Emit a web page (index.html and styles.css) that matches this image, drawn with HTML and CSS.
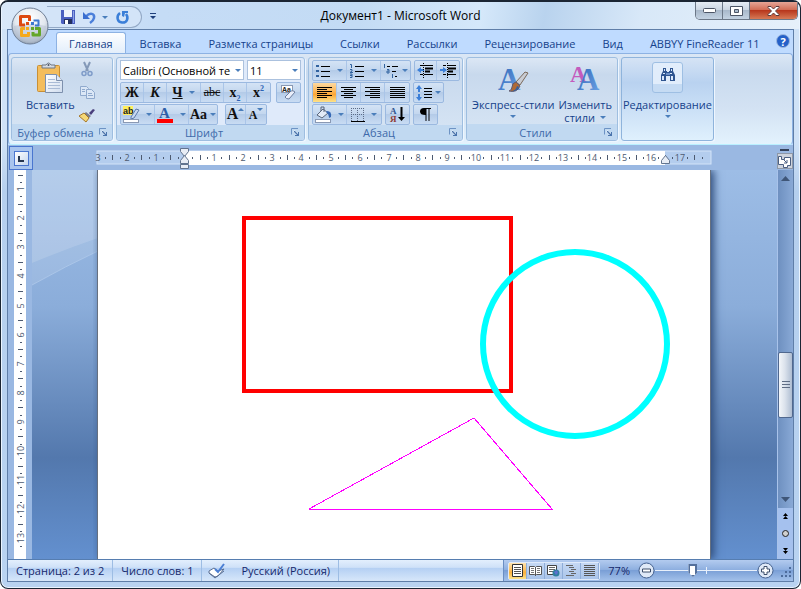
FILE: index.html
```
<!DOCTYPE html>
<html lang="ru">
<head>
    <meta charset="UTF-8">
    <meta name="viewport" content="width=device-width, initial-scale=1.0">
    <title>Документ1 - Microsoft Word</title>
    <link rel="stylesheet" href="styles.css">
</head>
<body>
    <svg class="defs" aria-hidden="true">
        <defs>
            <symbol id="arrow" viewBox="0 0 6 3"><path d="M0 0h6L3 3z" fill="#4a7ebb"/></symbol>
            <symbol id="launcher" viewBox="0 0 9 9">
                <path d="M.5 6.500V.5H7" fill="none" stroke="#6d93c4"/>
                <path d="M3 3l4 4" stroke="#fff" stroke-width="2"/>
                <path d="M3 3h1l3 3V4h1v4H4V7h2L3 4z" fill="#4a74ad"/>
            </symbol>
            <linearGradient id="blueA" x1="0" y1="0" x2="1" y2="1"><stop offset="0" stop-color="#2b62b4"/><stop offset="1" stop-color="#6fa6e8"/></linearGradient>
            <linearGradient id="paper" x1="0" y1="0" x2="1" y2="1"><stop offset="0" stop-color="#fff"/><stop offset="1" stop-color="#cfdcee"/></linearGradient>
            <radialGradient id="orb" cx=".5" cy=".3" r=".7"><stop offset="0" stop-color="#fff"/><stop offset=".6" stop-color="#e3e8ef"/><stop offset="1" stop-color="#9aa7b8"/></radialGradient>
        </defs>
    </svg>

    <div class="window">
        <header class="titlebar">
            <button class="office" aria-label="Office">
                <svg width="38" height="38" viewBox="0 0 38 38">
                    <circle cx="19" cy="19" r="18" fill="url(#orb)" stroke="#6f7f96"/>
                    <path d="M3 19a16 16 0 0 0 32 0q-16-4-32 0z" fill="#b4c0d2" opacity=".5"/>
                    <g fill="none" stroke-linejoin="round">
                        <path d="M14 18H9.500V9.500h9V14" stroke="#dd4a12" stroke-width="3"/>
                        <path d="M22.500 13.500h5v5H24" stroke="#3d78cf" stroke-width="2"/>
                        <path d="M14 21.500h-3.500v7h7V25" stroke="#f5a91c" stroke-width="3"/>
                        <path d="M24 21.500h4.500v6.500h-6.500V25" stroke="#64a629" stroke-width="3"/>
                    </g>
                    <path d="M15 15h3v3h-3z" fill="#dd4a12"/><path d="M20 15h3v3h-3z" fill="#3d78cf"/>
                    <path d="M15 20h3v3h-3z" fill="#f5a91c"/><path d="M20 20h3v3h-3z" fill="#64a629"/>
                </svg>
            </button>
            <div class="quick">
                <button aria-label="Сохранить">
                    <svg width="14" height="14" viewBox="0 0 14 14"><path d="M0 0h14v14H1l-1-1z" fill="#4a5fc0"/><path d="M3 0h8v7H3z" fill="#eef3fc"/><path d="M3 9h8v5H3z" fill="#23305f"/><path d="M4 10h3v4H4z" fill="#fff"/><path d="M12 1h1v12h-1z" fill="#8ea4e6"/></svg>
                </button>
                <button aria-label="Отменить" class="undo">
                    <svg width="14" height="13" viewBox="0 0 14 13"><path d="M3 5.500C7 1 12 2.500 11 7c-.5 2.500-2.500 4-4 5" fill="none" stroke="#4b7fda" stroke-width="2.500"/><path d="M0 1v7h7z" fill="#3b6fd0"/></svg>
                    <svg width="6" height="3"><use href="#arrow"/></svg>
                </button>
                <button aria-label="Повторить">
                    <svg width="13" height="13" viewBox="0 0 13 13"><path d="M4 2C0 5 1 11 6 11.500S13 7 10 3" fill="none" stroke="#3b7fd8" stroke-width="2.500"/><path d="M6 0h6v2H9l-1 4-2-1z" fill="#3b7fd8"/></svg>
                </button>
            </div>
            <button class="quick-more" aria-label="Настройка панели">
                <svg width="6" height="6" viewBox="0 0 6 6"><path d="M0 0h6v1H0zM0 3h6L3 6z" fill="#1e3f7c"/></svg>
            </button>
            <h1>Документ1 - Microsoft Word</h1>
            <div class="winbuttons">
                <button aria-label="Свернуть"><svg width="13" height="6"><rect x=".5" y=".5" width="12" height="4" rx="1" fill="#fff" stroke="#4c5566"/></svg></button>
                <button aria-label="Развернуть"><svg width="13" height="10"><path d="M.5 .5h12v9H.5zM4.500 3.500v3h4v-3z" fill="#fff" stroke="#4c5566" fill-rule="evenodd"/></svg></button>
                <button aria-label="Закрыть" class="close"><svg width="13" height="10" viewBox="0 0 13 10"><path d="M1 .5h3l2.500 2.500L9 .5h3v1L8.500 5l3.500 3.500v1H9L6.500 7 4 9.500H1v-1L4.500 5 1 1.500z" fill="#fff" stroke="#5d3a3a"/></svg></button>
            </div>
        </header>

        <div class="client">
            <nav class="tabs">
                <a href="#" class="active">Главная</a>
                <a href="#">Вставка</a>
                <a href="#">Разметка страницы</a>
                <a href="#">Ссылки</a>
                <a href="#">Рассылки</a>
                <a href="#">Рецензирование</a>
                <a href="#">Вид</a>
                <a href="#">ABBYY FineReader 11</a>
                <button class="help" aria-label="Справка">?</button>
            </nav>

            <div class="ribbon">
                <section class="group clipboard">
                    <div class="tools">
                        <button class="big">
                            <svg width="28" height="32" viewBox="0 0 28 32">
                                <rect x="1.500" y="3.500" width="22" height="26" rx="1" fill="#f4bd5c" stroke="#c98f35"/>
                                <path d="M6 6V3h4q2.500-4 5 0h4v3z" fill="#d6dbe3" stroke="#6c7684"/><circle cx="12.500" cy="3" r="1" fill="#4c5566"/>
                                <path d="M9.500 12.500h11l6 6v12h-17z" fill="url(#paper)" stroke="#7d90ad"/><path d="M20.500 12.500v6h6" fill="#dfe8f5" stroke="#7d90ad"/>
                                <path d="M12 17.500h7M12 20.500h12M12 23.500h12M12 26.500h12" stroke="#a9bbd6"/>
                            </svg>
                            <span>Вставить</span>
                            <svg width="6" height="3"><use href="#arrow"/></svg>
                        </button>
                        <div class="stack">
                            <button aria-label="Вырезать"><svg width="12" height="15" viewBox="0 0 12 15"><path d="M3 0l4 9M9 0L5 9" stroke="#8499b8" stroke-width="2"/><circle cx="3" cy="11.500" r="2" fill="none" stroke="#7f9cc9" stroke-width="1.500"/><circle cx="9" cy="11.500" r="2" fill="none" stroke="#7f9cc9" stroke-width="1.500"/></svg></button>
                            <button aria-label="Копировать"><svg width="15" height="13" viewBox="0 0 15 13"><path d="M.5 .5h6l2 2v7h-8z" fill="#dbe7f6" stroke="#8fa9cd"/><path d="M6.500 3.500h5l3 3v6h-8z" fill="#dbe7f6" stroke="#8fa9cd"/><path d="M2 3.500h3M2 5.500h3M8 7.500h4M8 9.500h5" stroke="#8fa9cd"/></svg></button>
                            <button aria-label="Формат по образцу"><svg width="16" height="14" viewBox="0 0 16 14"><path d="M10 5l4-4 2 1-4 5z" fill="#4a3f7c"/><path d="M7 4l5 4-2 2-5-4z" fill="#7b7f8c"/><path d="M5 5l5 5-3 4-7-6z" fill="#f5d876" stroke="#a5772a"/></svg></button>
                        </div>
                    </div>
                    <footer><span>Буфер обмена</span><button aria-label="Буфер обмена: параметры"><svg width="9" height="9"><use href="#launcher"/></svg></button></footer>
                </section>

                <section class="group font">
                    <div class="rows">
                        <div class="row">
                            <label class="combo wide"><select aria-label="Шрифт"><option>Calibri (Основной те</option></select><svg width="6" height="3"><use href="#arrow"/></svg></label>
                            <label class="combo"><select aria-label="Размер шрифта"><option>11</option></select><svg width="6" height="3"><use href="#arrow"/></svg></label>
                        </div>
                        <div class="row">
                            <div class="bar">
                                <button class="serif"><b>Ж</b></button><button class="serif"><b><i>К</i></b></button><button class="serif split"><b><u>Ч</u></b><svg width="6" height="3"><use href="#arrow"/></svg></button><button class="serif strike"><s>abc</s></button><button class="serif"><b>x<sub>2</sub></b></button><button class="serif"><b>x<sup>2</sup></b></button>
                            </div>
                            <div class="bar end"><button aria-label="Очистить формат"><svg width="17" height="17" viewBox="0 0 17 17"><rect x="1.500" y="1.500" width="11" height="7" fill="#fff" stroke="#8a99b3"/><text x="2" y="8" class="tiny">Aa</text><path d="M5 13l6-6q2-1 4 1l-6 7q-3 0-4-2z" fill="#e9eefa" stroke="#6c7d9e"/></svg></button></div>
                        </div>
                        <div class="row">
                            <div class="bar">
                                <button class="split" aria-label="Цвет выделения"><svg width="17" height="17" viewBox="0 0 17 17"><path d="M0 0h10v9H0z" fill="#ffef5c"/><text x="0" y="8" class="tiny ab">ab</text><path d="M8 11l5-8 3 1-5 8-3 1z" fill="#c8d8f0" stroke="#5b79aa"/><rect x=".5" y="13.500" width="15" height="3" fill="#fff" stroke="#8a99b3"/></svg><svg width="6" height="3"><use href="#arrow"/></svg></button><button class="split" aria-label="Цвет текста"><svg width="17" height="17" viewBox="0 0 17 17"><text x="2" y="12" class="letter">A</text><path d="M0 13h16v4H0z" fill="#f00"/></svg><svg width="6" height="3"><use href="#arrow"/></svg></button><button class="serif case"><b>Aa</b><svg width="6" height="3"><use href="#arrow"/></svg></button>
                            </div>
                            <div class="bar sizes"><button class="serif grow"><b>A</b><svg width="6" height="3" class="up"><use href="#arrow"/></svg></button><button class="serif shrink"><b>A</b><svg width="6" height="3" class="up"><use href="#arrow"/></svg></button></div>
                        </div>
                    </div>
                    <footer><span>Шрифт</span><button aria-label="Шрифт: параметры"><svg width="9" height="9"><use href="#launcher"/></svg></button></footer>
                </section>

                <section class="group para">
                    <div class="rows">
                        <div class="row">
                            <div class="bar">
                                <button class="split" aria-label="Маркеры"><svg width="15" height="14" viewBox="0 0 15 14"><path d="M0 1h3v2H0zM0 6h3v2H0zM0 11h3v2H0z" fill="#31629f"/><path d="M5 2.500h9M5 7.500h9M5 12.500h9" stroke="#000"/></svg><svg width="6" height="3"><use href="#arrow"/></svg></button><button class="split" aria-label="Нумерация"><svg width="15" height="14" viewBox="0 0 15 14"><path d="M0 .5h1.500V4M0 5.500h2v1.500l-2 1.500h3M0 10h2v3.500H0M0 11.500h2" fill="none" stroke="#31629f"/><path d="M5 2.500h9M5 7.500h9M5 12.500h9" stroke="#000"/></svg><svg width="6" height="3"><use href="#arrow"/></svg></button><button class="menu" aria-label="Многоуровневый список"><svg width="16" height="14" viewBox="0 0 16 14"><path d="M1.500 0v4M4 5.500h2V9H4V7h2M9.500 10v4" fill="none" stroke="#31629f"/><path d="M4 2.500h3M9 2.500h6M9 7.500h4M12 12.500h2" stroke="#000"/></svg><svg width="6" height="3"><use href="#arrow"/></svg></button>
                            </div>
                            <div class="bar indents">
                                <button aria-label="Уменьшить отступ"><svg width="17" height="15" viewBox="0 0 17 15"><path d="M3 2.500h3M7 2.500h9M3 11.500h3M7 11.500h9" stroke="#000"/><path d="M8 5.500h8M8 8.500h5" stroke="#000" stroke-width="2"/><path d="M0 7l4-3v2h3v2H4v2z" fill="#3b7fd8"/><path d="M6.500 0v15" stroke="#000" stroke-dasharray="1 1"/></svg></button><button aria-label="Увеличить отступ"><svg width="17" height="15" viewBox="0 0 17 15"><path d="M3 2.500h3M7 2.500h9M3 11.500h3M7 11.500h9" stroke="#000"/><path d="M8 5.500h8M8 8.500h5" stroke="#000" stroke-width="2"/><path d="M7 7L3 4v2H0v2h3v2z" fill="#3b7fd8"/><path d="M7.500 0v15" stroke="#000" stroke-dasharray="1 1"/></svg></button>
                            </div>
                        </div>
                        <div class="row">
                            <div class="bar aligns">
                                <button class="on" aria-label="По левому краю"><svg width="15" height="12"><path d="M0 .5h15M0 2.500h10M0 4.500h15M0 6.500h10M0 8.500h15M0 10.500h10" stroke="#000"/></svg></button><button aria-label="По центру"><svg width="15" height="12"><path d="M0 .5h15M3 2.500h9M0 4.500h15M3 6.500h9M0 8.500h15M3 10.500h9" stroke="#000"/></svg></button><button aria-label="По правому краю"><svg width="15" height="12"><path d="M0 .5h15M5 2.500h10M0 4.500h15M5 6.500h10M0 8.500h15M5 10.500h10" stroke="#000"/></svg></button><button aria-label="По ширине"><svg width="15" height="12"><path d="M0 .5h15M0 2.500h15M0 4.500h15M0 6.500h15M0 8.500h15M0 10.500h15" stroke="#000"/></svg></button>
                            </div>
                            <div class="bar"><button class="menu" aria-label="Интервал"><svg width="16" height="16" viewBox="0 0 16 16"><path d="M3 0l3 4H4v3H2V4H0zM3 16l3-4H4V9H2v3H0z" fill="#3b7fd8"/><path d="M8 3.500h8M8 6.500h8M8 9.500h8M8 12.500h8" stroke="#000"/></svg><svg width="6" height="3"><use href="#arrow"/></svg></button></div>
                        </div>
                        <div class="row">
                            <div class="bar">
                                <button class="split" aria-label="Заливка"><svg width="17" height="17" viewBox="0 0 17 17"><path d="M2 9l6-6 5 4-6 5z" fill="#e3ebf7" stroke="#59657a"/><path d="M6 5V1h3v5" fill="none" stroke="#59657a"/><path d="M12 5q5 0 4 6l-2 1q0-4-3-6z" fill="#3668b5"/><rect x=".5" y="13.500" width="15" height="3" fill="#fff" stroke="#8a99b3"/></svg><svg width="6" height="3"><use href="#arrow"/></svg></button><button class="split" aria-label="Границы"><svg width="14" height="14"><path d="M.5 0v13M6.500 0v13M12.500 0v13M0 .5h13M0 6.500h13" stroke="#5c6b85" stroke-dasharray="1 1"/><path d="M0 13.500h14" stroke="#000"/></svg><svg width="6" height="3"><use href="#arrow"/></svg></button>
                            </div>
                            <div class="bar"><button aria-label="Сортировка"><svg width="15" height="17" viewBox="0 0 15 17"><text x="0" y="8" class="sort">А</text><text x="0" y="16" class="sort red">Я</text><path d="M11.500 1v11" stroke="#000" stroke-width="2"/><path d="M8 11h7l-3.500 4z"/></svg></button></div>
                            <div class="bar"><button aria-label="Знаки абзаца"><svg width="11" height="13" viewBox="0 0 11 13"><path d="M4 0h7v1H9.500v12h-1V1H6.500v12h-1V7Q0 7 0 3.500T4 0z"/></svg></button></div>
                        </div>
                    </div>
                    <footer><span>Абзац</span><button aria-label="Абзац: параметры"><svg width="9" height="9"><use href="#launcher"/></svg></button></footer>
                </section>

                <section class="group styles">
                    <div class="tools">
                        <button class="big">
                            <svg width="30" height="32" viewBox="0 0 30 32"><text x="0" y="28" class="huge blue">A</text><path d="M27 10l3 1-8 12-4-3z" fill="#c9ccd3" stroke="#7a6a5c"/><path d="M18 20l4 4q-3 7-11 5 3-1 3-4 0-4 4-5z" fill="#b06a35" stroke="#5f5a70"/><path d="M13 29q5 0 6-5l2 1q-2 5-8 4z" fill="#335f9e"/></svg>
                            <span>Экспресс-стили</span>
                            <svg width="6" height="3"><use href="#arrow"/></svg>
                        </button>
                        <button class="big">
                            <svg width="30" height="32" viewBox="0 0 30 32"><text x="0" y="20" class="mid">A</text><text x="7" y="28" class="huge blue">A</text></svg>
                            <span>Изменить</span>
                            <span class="line2">стили <svg width="6" height="3"><use href="#arrow"/></svg></span>
                        </button>
                    </div>
                    <footer><span>Стили</span><button aria-label="Стили: параметры"><svg width="9" height="9"><use href="#launcher"/></svg></button></footer>
                </section>

                <section class="group edit">
                    <button class="big">
                        <span class="tile"><svg width="16" height="14" viewBox="0 0 16 14"><path d="M3 0h3v3h1v1h2V3h1V0h3v3l2 4v6h-5V8H6v5H1V7l2-4z" fill="#2f5590"/><path d="M4 1h1v2H4zM11 1h1v2h-1zM3 5h2v1H3zM10 5h2v1h-2zM2 8h2v4H2zM11 8h2v4h-2z" fill="#dce9fb"/><path d="M6 5h4v2H6z" fill="#6b8fc6"/></svg></span>
                        <span>Редактирование</span>
                        <svg width="6" height="3"><use href="#arrow"/></svg>
                    </button>
                </section>
            </div>

            <div class="hruler">
                <button class="tabstop" aria-label="Табуляция"><span><svg width="6" height="6"><path d="M1 0v5h5" fill="none" stroke="#26364f" stroke-width="2"/></svg></span></button>
                <svg id="hruler" height="24"></svg>
                <div class="corner">
                    <span class="splitter"></span>
                    <button aria-label="Линейка"><svg width="13" height="13" viewBox="0 0 13 13"><path d="M.5 1.500h3v3h3v-2h6v8h-3v2h-4v-3h-5z" fill="#fff" stroke="#4b5f82"/><path d="M5 4l4 4M9 5v3H6" fill="none" stroke="#4b5f82"/></svg></button>
                </div>
            </div>

            <main class="workspace">
                <svg id="vruler" width="24"></svg>
                <div class="desk">
                    <svg class="swoosh" viewBox="0 0 66 400" width="66" height="400"><path d="M0 93Q34 79 66 68V0H0z" fill="#fff" opacity=".14"/><path d="M0 115Q34 96 66 81V0H0z" fill="#fff" opacity=".12"/><path d="M0 115Q34 96 66 81" fill="none" stroke="#b9d0ee" opacity=".6"/></svg>
                    <div class="page">
                        <svg width="100%" height="100%" fill="none">
                            <rect x="146" y="48" width="267" height="173" stroke="#f00" stroke-width="4"/>
                            <circle cx="477" cy="174" r="92" stroke="#0ff" stroke-width="6"/>
                            <path d="M376 248L211 339H454z" stroke="#f0f" shape-rendering="crispEdges"/>
                        </svg>
                    </div>
                </div>
                <div class="scroll">
                    <div class="track">
                        <button aria-label="Вверх"><svg width="9" height="5"><path d="M0 5h9L4.500 0z" fill="#3f5678"/></svg></button>
                        <span class="above"></span>
                        <span class="thumb"></span>
                        <span class="below"></span>
                        <button aria-label="Вниз"><svg width="9" height="5"><path d="M0 0h9L4.500 5z" fill="#3f5678"/></svg></button>
                    </div>
                    <div class="browse">
                        <button aria-label="Предыдущая страница"><svg width="5" height="7"><path d="M2.500 0L5 3H0zM2.500 3L5 6H0z"/></svg></button>
                        <button aria-label="Объект перехода"><svg width="7" height="7"><circle cx="3.500" cy="3.500" r="3" fill="#cfcfcf" stroke="#222"/></svg></button>
                        <button aria-label="Следующая страница"><svg width="5" height="7"><path d="M2.500 7L5 4H0zM2.500 4L5 1H0z"/></svg></button>
                    </div>
                </div>
            </main>

            <footer class="status">
                <button>Страница: 2 из 2</button>
                <button>Число слов: 1</button>
                <button class="spell" aria-label="Правописание"><svg width="17" height="16" viewBox="0 0 17 16"><path d="M0 8l5-3 4 3 6-2-6 7-3 1-6-4z" fill="#fff" stroke="#5b6f93"/><path d="M0 10l6 5 9-7" fill="none" stroke="#5b6f93"/><path d="M6 6l3 3 6-8" fill="none" stroke="#4b7fd4" stroke-width="2"/></svg></button>
                <button class="lang">Русский (Россия)</button>
                <div class="viewzone">
                    <div class="views">
                        <button class="on" aria-label="Разметка страницы"><svg width="11" height="13"><path d="M.5 .5h10v12H.5z" fill="#fff" stroke="#333"/><path d="M2 3.500h7M2 5.500h7M2 7.500h7M2 9.500h7" stroke="#555"/></svg></button><button aria-label="Режим чтения"><svg width="13" height="12"><path d="M.5 1.500h5l1 1 1-1h5v8h-5l-1 1-1-1h-5zM6.500 2v9" fill="#fff" stroke="#555"/><path d="M2 3.500h3M2 5.500h3M2 7.500h3M8 3.500h3M8 5.500h3M8 7.500h3" stroke="#777"/></svg></button><button aria-label="Веб-документ"><svg width="13" height="12"><path d="M.5 .5h9v9h-9z" fill="#fff" stroke="#444"/><path d="M2 2.500h6M2 4.500h6M2 6.500h4" stroke="#666"/><circle cx="9" cy="8" r="3.500" fill="#2f7f9f"/><path d="M7 7l3-2 1 3-2 2z" fill="#5b6fd0"/></svg></button><button aria-label="Структура"><svg width="11" height="11"><path d="M0 .5h7M3 2.500h5M5 4.500h5M3 6.500h5M5 8.500h5M0 10.500h8" stroke="#666"/></svg></button><button aria-label="Черновик"><svg width="11" height="11"><path d="M0 .5h11M0 2.500h11M0 4.500h11M0 6.500h11M0 8.500h11M0 10.500h11" stroke="#555"/></svg></button>
                    </div>
                    <button class="percent">77%</button>
                    <button class="round" aria-label="Уменьшить"><svg width="17" height="17"><circle cx="8.500" cy="8.500" r="7.500" fill="#dfe9f7" stroke="#44618f"/><path d="M4.500 7h8v3h-8z" fill="#fff" stroke="#3c4e6b"/></svg></button>
                    <input type="range" min="0" max="100" value="36" aria-label="Масштаб">
                    <button class="round" aria-label="Увеличить"><svg width="17" height="17"><circle cx="8.500" cy="8.500" r="7.500" fill="#dfe9f7" stroke="#44618f"/><path d="M7 4.500h3V7h2.500v3H10v2.500H7V10H4.500V7H7z" fill="#fff" stroke="#3c4e6b"/></svg></button>
                    <svg class="grip" width="11" height="11"><path d="M8 0h2v2H8zM4 4h2v2H4zM8 4h2v2H8zM0 8h2v2H0zM4 8h2v2H4zM8 8h2v2H8z" fill="#4d6c9c"/></svg>
                </div>
            </footer>
        </div>
    </div>

    <script>
        // one centimetre at 77% zoom
        const CM = 29.1;

        function marks(from, to, place) {
            let out = '';
            for (let q = from; q <= to; q++) {
                const pos = Math.round(q * CM / 4);
                if (q % 4 === 0) {
                    if (q !== 0) out += place(pos, 'num', Math.abs(q / 4));
                } else {
                    out += place(pos, q % 2 === 0 ? 'half' : 'dot');
                }
            }
            return out;
        }

        const zero = 89;
        document.getElementById('hruler').innerHTML =
            '<rect x="1" y="5" width="614" height="13" fill="#b4cdee" stroke="#d3e3f8"/>' +
            '<rect x="88" y="5" width="481" height="14" fill="#fff"/>' +
            marks(-12, 71, (p, kind, n) => {
                const x = zero + p;
                if (kind === 'num') return `<text x="${x}" y="15" class="num">${n}</text>`;
                const h = kind === 'half' ? 5 : 2;
                return `<rect x="${x}" y="${kind === 'half' ? 9 : 11}" width="1" height="${h}" class="mark"/>`;
            }) +
            '<path d="M84.500 2.500h8v3l-4 5-4-5z" fill="#e8edf5" stroke="#62748f"/>' +
            '<path d="M84.500 17.500v-3l4-5 4 5v3z" fill="#e8edf5" stroke="#62748f"/>' +
            '<path d="M84.500 18.500h8v4h-8z" fill="#e8edf5" stroke="#62748f"/>' +
            '<path d="M565.500 17.500v-3l4-5 4 5v3z" fill="#e8edf5" stroke="#62748f"/>';

        document.getElementById('vruler').innerHTML =
            '<rect x="6" y="0" width="12" height="100%" fill="#fff"/>' +
            marks(1, 53, (p, kind, n) => {
                const y = p - 10;
                if (y < 0) return '';
                if (kind === 'num') return `<text transform="translate(16 ${y}) rotate(-90)" class="num">${n}</text>`;
                return kind === 'half'
                    ? `<rect x="10" y="${y}" width="5" height="1" class="mark"/>`
                    : `<rect x="12" y="${y}" width="2" height="1" class="mark"/>`;
            });
    </script>
</body>
</html>
```
FILE: styles.css
```
* { box-sizing: border-box; }
body { margin: 0; background: #fff; font-family: "Open Sans", "Noto Sans", sans-serif; font-size: 11px; color: #15428b; }
button { margin: 0; padding: 0; border: none; background: none; font: inherit; color: inherit; display: flex; align-items: center; justify-content: center; }
svg { display: block; flex: none; overflow: visible; }
.defs { position: absolute; width: 0; height: 0; }

.window { display: flex; flex-direction: column; height: 100vh; padding: 0 6px 6px; border: 1px solid #1b2533; border-top-width: 2px; border-radius: 8px; background: linear-gradient(#cfe2f7, #cfe2f7 140px, #b5cfee 190px, #b9d3f1); box-shadow: inset 0 0 0 1px #eaf4ff; }

/* title bar */
.titlebar { position: relative; display: flex; align-items: flex-start; height: 27px; margin: 0 -5px; background: linear-gradient(100deg, #d9e8f9, #c5dcf6 20%, #c3dbf4 45%, #d5e8fa 60%, #b9d3ee 68%, #d8e8f8 80%, #e6f0fa); border-radius: 6px 6px 0 0; }
.office { position: absolute; left: 9px; top: 5px; z-index: 2; }
.quick { display: flex; align-items: center; gap: 8px; height: 22px; margin: 4px 0 0 45px; padding: 0 12px 0 14px; border: 1px solid #93a9c6; border-left: none; border-radius: 0 11px 11px 0; background: #d3e4f8; }
.undo { gap: 5px; }
.quick-more { margin: 11px 0 0 8px; }
.titlebar h1 { position: absolute; left: 0; right: 0; top: 5px; margin: 0; text-align: center; font-size: 12px; line-height: 18px; font-weight: normal; color: #000; pointer-events: none; }
.winbuttons { display: flex; height: 18px; margin: 0 1px 0 auto; border: 1px solid #6b7787; border-top: none; border-radius: 0 0 5px 5px; overflow: hidden; }
.winbuttons button { width: 27px; background: linear-gradient(#e6edf5, #c9d4e1 50%, #a9b9cb 50%, #c3d2e2); border-right: 1px solid #6b7787; }
.winbuttons .close { width: 47px; border: none; background: linear-gradient(#e6a596, #d0674f 50%, #b8371c 50%, #d77a55); }

.client { display: flex; flex-direction: column; flex: 1; min-height: 0; border: 1px solid #5f7ea8; background: #bfdbff; }

/* tabs */
.tabs { display: flex; align-items: flex-end; height: 23px; padding-left: 48px; }
.tabs a { height: 21px; padding: 0 12px; margin-right: 1px; border: 1px solid transparent; line-height: 21px; color: #15428b; text-decoration: none; white-space: nowrap; }
.tabs .active { border-color: #8db2e3; border-bottom: none; border-radius: 3px 3px 0 0; background: linear-gradient(#fdfeff, #e3eefb); }
.help { width: 14px; height: 14px; margin: 0 3px 5px auto; border: 1px solid #9db8e0; border-radius: 50%; background: #2460c8; color: #fff; font-weight: bold; }

/* ribbon */
.ribbon { display: flex; gap: 3px; height: 92px; padding: 3px 2px; border: 1px solid #8db2e3; border-radius: 4px; background: linear-gradient(#dbe7f5, #c9daee 20%, #d3e2f3 60%, #e3f2fd); border-bottom-color: #b9f0ff; }
.group { display: flex; flex-direction: column; border: 1px solid #9ebee0; border-radius: 3px; background: linear-gradient(#dce7f5, #c8d9ed 20%, #d8e6f5); box-shadow: 1px 1px 0 #eef6ff; overflow: hidden; }
.group footer { display: flex; align-items: center; height: 16px; margin-top: auto; padding-right: 4px; background: #c1d9f1; color: #3e6aaa; }
.group footer span { flex: 1; text-align: center; white-space: nowrap; }
.clipboard { width: 102px; }
.font { width: 189px; background: #dfeafa; }
.para { width: 155px; }
.styles { width: 152px; }
.edit { width: 93px; background: linear-gradient(#d5e3f5, #b9d2f0 30%, #dff0fd); border-color: #8fb4dc; }
.tools { display: flex; justify-content: space-between; }
.big { flex-direction: column; justify-content: flex-start; padding-top: 4px; }
.big span { line-height: 13px; white-space: nowrap; }
.big > svg + span { margin-top: 4px; }
.big span + svg { margin-top: 4px; }
.clipboard .big { margin-left: 14px; }
.styles .tools { padding: 0 5px; }
.line2 { display: flex; align-items: center; gap: 5px; }
.stack { display: flex; flex-direction: column; justify-content: space-between; align-items: center; height: 60px; margin: 4px 17px 0 0; }
.tile { display: flex; justify-content: center; width: 31px; height: 31px; padding-top: 5px; margin-bottom: 5px; border: 1px solid #9ebfe3; border-radius: 3px; background: linear-gradient(#e1edfb 72%, #c5dbf3 72%); }

.rows { display: flex; flex-direction: column; gap: 1px; padding: 2px 3px 0; }
.row { display: flex; gap: 3px; height: 21px; }
.bar { display: flex; border: 1px solid #9bb9e0; border-radius: 2px; background: linear-gradient(#d4e3f5, #c2d6ee 50%, #b4cbe8 50%, #c9dcf3); }
.bar button { width: 23px; gap: 3px; border-right: 1px solid #aac5e8; }
.bar button:last-child { border-right: none; }
.bar .split { width: 34px; gap: 6px; }
.bar .menu { width: 29px; }
.bar .case { width: 28px; }
.bar .on { background: linear-gradient(#fcd9a0, #fdb553 45%, #fba636 60%, #fde38b); }
.end { margin-left: auto; }
.indents button { width: 22px; }
.aligns button { width: 24px; }
.sizes { margin-left: 4px; }
.bar.sizes button { width: 20px; gap: 0; align-items: flex-start; }
.combo { position: relative; width: 54px; height: 20px; }
.combo.wide { width: 124px; }
.combo select { width: 100%; height: 100%; padding: 0 12px 0 2px; border: 1px solid #abc1de; background: #fff; font: inherit; color: #000; appearance: none; }
.combo svg { position: absolute; right: 3px; top: 9px; }
.serif { font-family: "Liberation Serif", serif; font-size: 14px; color: #111; }
.serif sub, .serif sup { font-size: 8px; line-height: 0; color: #2b62b4; }
.serif.strike { font-size: 12px; }
.serif.grow { font-size: 16px; }
.serif.shrink { font-size: 12px; padding-top: 3px; }
.up { margin-top: 3px; }
.shrink .up { margin-top: 0; }
.grow .up { transform: rotate(180deg); }
.tiny { font: bold 7px "Liberation Sans", sans-serif; fill: #222; }
.tiny.ab { font-size: 9px; }
.letter { font: bold 15px "Liberation Serif", serif; fill: #2f5fa8; }
.sort { font: bold 9px "Liberation Serif", serif; fill: #2f5590; }
.sort.red { fill: #8f3b35; }
.huge { font: bold 31px "Liberation Serif", serif; }
.mid { font: bold 23px "Liberation Serif", serif; fill: #c45bbd; }
.blue { fill: url(#blueA); }

/* rulers */
.hruler { display: flex; height: 25px; padding-top: 1px; background: #9ab8e2; }
.tabstop { width: 24px; height: 24px; margin-left: 1px; border: 1px solid #4a76cf; background: #a9c5ee; }
.tabstop span { display: flex; align-items: flex-end; justify-content: center; width: 15px; height: 15px; padding-bottom: 3px; border: 1px solid #4a76cf; background: linear-gradient(135deg, #fff, #c5d6ee); }
.hruler > svg { flex: 1; margin-left: 63px; }
.num { font-size: 9px; text-anchor: middle; fill: #4d5a70; }
.mark { fill: #4d5a70; }
.corner { display: flex; flex-direction: column; align-items: center; width: 17px; }
.splitter { width: 9px; height: 2px; margin: 3px 0 2px; background: #35425a; }
.corner button { width: 16px; height: 16px; border: 1px solid #8e98a8; background: #cdd3dd; }

/* document */
.workspace { display: flex; flex: 1; min-height: 0; background: #9ab8e2; }
.workspace > svg { height: 100%; overflow: hidden; }
.desk { position: relative; display: flex; flex: 1; background: linear-gradient(#9dbde6, #8badda 35%, #5378ad 74%, #6390cf); }
.swoosh { position: absolute; left: 0; top: 0; }
.page { position: relative; flex: 1; margin: 0 66px 0 65px; border: solid #66707f; border-width: 0 1px; background: #fff; box-shadow: 3px 0 8px #2f4d7c; clip-path: inset(0 -16px 0 -4px); }
.scroll { display: flex; flex-direction: column; width: 16px; border-left: 1px solid #a9c3ea; background: #a5c1ee; }
.track { display: flex; flex: 1; flex-direction: column; background: linear-gradient(90deg, #6e90c0, #89a9d6); }
.track button { height: 17px; }
.above { flex: 165; }
.below { flex: 73; }
.thumb { height: 66px; border: 1px solid #50688f; border-radius: 2px; background: repeating-linear-gradient(#5f6d85 0 1px, transparent 1px 3px) center / 8px 8px no-repeat, linear-gradient(90deg, #f3f6fa, #dbe2ec 45%, #aebdd2); }
.browse { display: flex; flex-direction: column; justify-content: space-around; height: 51px; }

/* status bar */
.status { display: flex; height: 22px; border-top: 1px solid #567db0; background: linear-gradient(#e3effd, #cfe1f8 35%, #b5d0f3 40%, #d7e7fa); color: #15286b; white-space: nowrap; }
.status > button { padding: 0 8px; border-right: 1px solid #9dbde4; }
.status > .spell { padding: 0 7px; border: none; }
.viewzone { display: flex; align-items: center; margin-left: auto; padding-left: 4px; border-left: 1px solid #6a8ec4; background: linear-gradient(#b3cbef, #8fb0e0 45%, #7a9fd6 50%, #a3c1ea); }
.views { display: flex; height: 18px; border: 1px solid #dfeafa; border-radius: 2px; background: linear-gradient(#c5d8f3, #a9c4ea); }
.views button { width: 18px; border-right: 1px solid #8fadd8; }
.views .on { background: linear-gradient(#fde3b0, #fbb13d 60%, #fde38b); }
.percent { margin: 0 8px; }
.viewzone input { width: 102px; height: 17px; margin: 0; appearance: none; background: linear-gradient(#e8f0fb, #e8f0fb) 51px 50% / 1px 7px no-repeat, linear-gradient(#e8f0fb, #e8f0fb) 0 50% / 100% 1px no-repeat; }
.viewzone input::-webkit-slider-thumb { appearance: none; width: 9px; height: 13px; border: 2px solid #54709c; background: #fff; clip-path: polygon(0 0, 100% 0, 100% 65%, 50% 100%, 0 65%); }
.grip { margin: 4px 1px 0 7px; }
```
